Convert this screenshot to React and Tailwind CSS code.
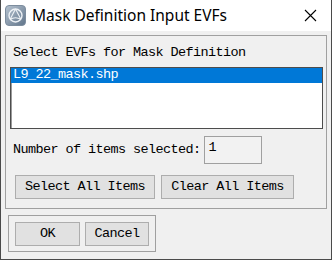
import React from "react";

const mono = { fontFamily: '"Liberation Mono", "DejaVu Sans Mono", monospace' };

function Btn({ w, children }) {
  return (
    <div
      className={`h-[24px] ${w} flex items-center justify-center bg-[#e1e1e1] border border-[#adadad] text-[13.5px] tracking-[-0.6px] text-black`}
      style={mono}
    >
      {children}
    </div>
  );
}

export default function App() {
  return (
    <div className="w-[332px] h-[260px] bg-[#f0f0f0] border-x border-b border-[#4a4a4a] flex flex-col overflow-hidden">
      {/* title bar */}
      <div className="h-[31px] bg-white flex items-center shrink-0">
        <svg className="ml-[4px]" width="21" height="21" viewBox="0 0 21 21">
          <defs>
            <linearGradient id="ig" x1="0" y1="0" x2="1" y2="1">
              <stop offset="0" stopColor="#b7c4d1" />
              <stop offset="1" stopColor="#5f7389" />
            </linearGradient>
          </defs>
          <rect x="0.5" y="0.5" width="20" height="20" rx="3.5" fill="url(#ig)" stroke="#7d8d9e" />
          <circle cx="10.5" cy="10.5" r="6.5" fill="none" stroke="#eef2f6" strokeWidth="1.4" />
          <path d="M10.5 4 L5 14.5 M10.5 4 L16 14.5 M5 14.5 Q10.5 11 16 14.5" fill="none" stroke="#eef2f6" strokeWidth="1.1" />
        </svg>
        <span
          className="ml-[6px] text-[15.5px] text-black leading-none"
          style={{ fontFamily: '"Noto Sans", "Open Sans", sans-serif' }}
        >
          Mask Definition Input EVFs
        </span>
        <svg className="ml-auto mr-[14px]" width="13" height="13" viewBox="0 0 13 13">
          <path d="M1 1 L12 12 M12 1 L1 12" stroke="#000" strokeWidth="1.1" />
        </svg>
      </div>

      {/* main frame */}
      <div className="ml-[4px] mt-[4px] w-[322px] h-[174px] border border-[#a0a0a0] flex flex-col shrink-0">
        <div className="h-[31px] flex items-center pl-[7px] pt-[4px] text-[13.5px] tracking-[-0.6px] text-black" style={mono}>
          Select EVFs for Mask Definition
        </div>
        <div className="ml-[4px] w-[313px] h-[62px] bg-white border border-[#4d4d4d] shadow-[inset_1px_1px_0_#9a9a9a]">
          <div className="h-[15px] bg-[#0078d7] flex items-center pl-[2px] text-white text-[13.5px] tracking-[-0.6px]" style={mono}>
            L9_22_mask.shp
          </div>
        </div>
        <div className="mt-[7px] h-[28px] flex items-center pl-[7px]">
          <span className="text-[13.5px] tracking-[-0.6px] text-black" style={mono}>
            Number of items selected:
          </span>
          <div className="ml-[3px] w-[58px] h-[28px] border border-[#a0a0a0] bg-[#f2f2f2] pl-[4px] pt-[4px] text-[13.5px] leading-[14px] text-black" style={mono}>
            1
          </div>
        </div>
        <div className="mt-[11px] ml-[9px] flex gap-[6px]">
          <Btn w="w-[140px]">Select All Items</Btn>
          <Btn w="w-[133px]">Clear All Items</Btn>
        </div>
      </div>

      {/* OK / Cancel group */}
      <div className="ml-[7px] mt-[6px] w-[148px] h-[37px] border border-[#a0a0a0] flex gap-[5px] pl-[6px] pt-[6px] shrink-0">
        <Btn w="w-[65px]">OK</Btn>
        <Btn w="w-[64px]">Cancel</Btn>
      </div>
    </div>
  );
}
